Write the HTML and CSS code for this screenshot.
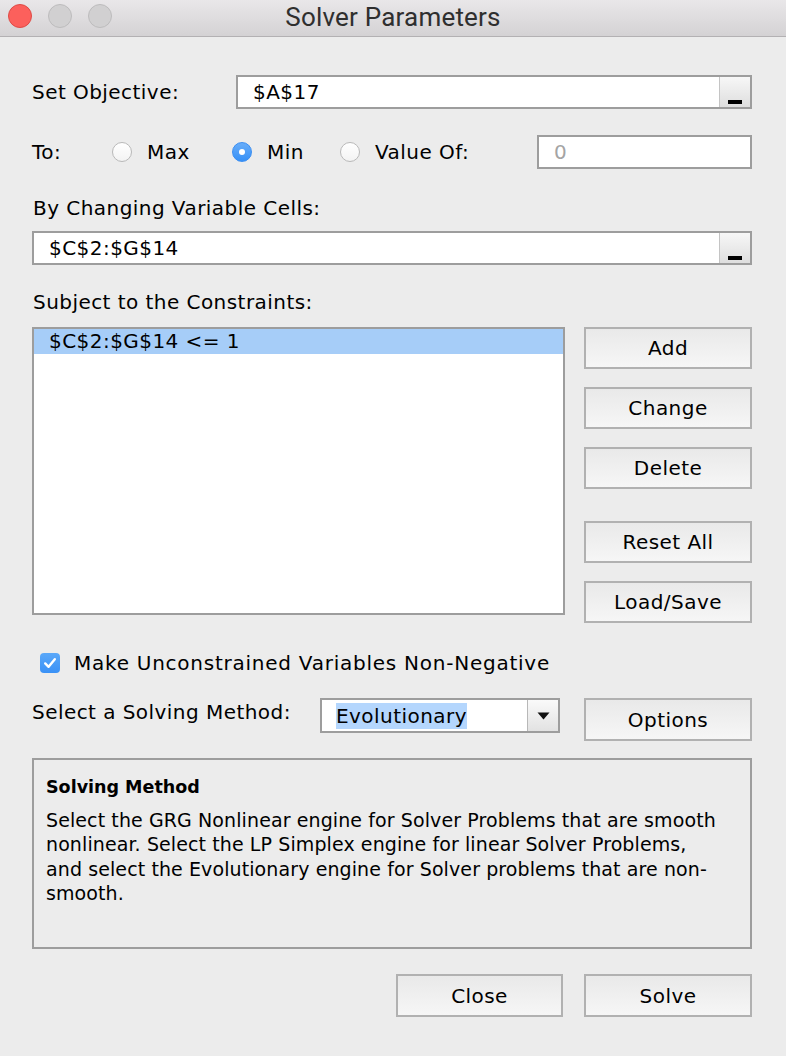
FILE: index.html
```html
<!DOCTYPE html>
<html>
<head>
<meta charset="utf-8">
<link rel="stylesheet" href="styles.css">
</head>
<body>
<div class="window">
  <div class="titlebar">
    <div class="lights">
      <span class="light red"></span>
      <span class="light gray"></span>
      <span class="light gray"></span>
    </div>
    <div class="title">Solver Parameters</div>
  </div>
  <div class="content">
    <div class="row objective">
      <div class="label obj-label">Set Objective:</div>
      <div class="field ref-field">
        <span class="field-text">$A$17</span>
        <span class="collapse-btn"><span class="bar"></span></span>
      </div>
    </div>

    <div class="row to-row">
      <div class="label to-label">To:</div>
      <div class="option opt-max"><span class="radio"></span><span class="opt-text">Max</span></div>
      <div class="option opt-min"><span class="radio checked"></span><span class="opt-text">Min</span></div>
      <div class="option opt-val"><span class="radio"></span><span class="opt-text">Value Of:</span></div>
      <div class="field value-field"><span class="field-text dim">0</span></div>
    </div>

    <div class="label section-label by-label">By Changing Variable Cells:</div>
    <div class="field ref-field wide">
      <span class="field-text">$C$2:$G$14</span>
      <span class="collapse-btn"><span class="bar"></span></span>
    </div>

    <div class="label section-label subj-label">Subject to the Constraints:</div>
    <div class="constraints">
      <div class="listbox">
        <div class="list-item selected">$C$2:$G$14 &lt;= 1</div>
      </div>
      <div class="btn-col">
        <div class="btn">Add</div>
        <div class="btn">Change</div>
        <div class="btn">Delete</div>
        <div class="btn gap-top">Reset All</div>
        <div class="btn">Load/Save</div>
      </div>
    </div>

    <div class="check-row">
      <span class="checkbox">
        <svg width="20" height="20" viewBox="0 0 20 20"><path d="M5.2 10.4 L8.6 13.8 L14.8 6.2" fill="none" stroke="#fff" stroke-width="2.4" stroke-linecap="round" stroke-linejoin="round"/></svg>
      </span>
      <span class="check-text">Make Unconstrained Variables Non-Negative</span>
    </div>

    <div class="method-row">
      <div class="label method-label">Select a Solving Method:</div>
      <div class="select">
        <span class="select-text"><span class="hl">Evolutionary</span></span>
        <span class="select-arrow">
          <svg width="13" height="8" viewBox="0 0 13 8"><path d="M0.5 0.5 H12.5 L6.5 7.5 Z" fill="#111"/></svg>
        </span>
      </div>
      <div class="btn options-btn">Options</div>
    </div>

    <div class="infobox">
      <div class="info-title">Solving Method</div>
      <div class="info-text">Select the GRG Nonlinear engine for Solver Problems that are smooth<br>nonlinear. Select the LP Simplex engine for linear Solver Problems,<br>and select the Evolutionary engine for Solver problems that are non-<br>smooth.</div>
    </div>

    <div class="footer">
      <div class="btn close-btn">Close</div>
      <div class="btn">Solve</div>
    </div>
  </div>
</div>
</body>
</html>
```

FILE: styles.css
```css
html, body {
  margin: 0;
  padding: 0;
}
body {
  background: #ececec;
  font-family: "DejaVu Sans", "Liberation Sans", sans-serif;
  font-size: 20px;
  letter-spacing: 0.45px;
  color: #000;
}
.window {
  width: 786px;
  height: 1056px;
  background: #ececec;
  overflow: hidden;
}
.titlebar {
  height: 36px;
  border-bottom: 1px solid #b3b1b3;
  background: linear-gradient(#e9e7e9, #d4d2d4);
  display: flex;
  align-items: center;
  position: relative;
}
.lights {
  display: flex;
  gap: 16px;
  padding-left: 8px;
  margin-top: -4px;
}
.light {
  width: 22px;
  height: 22px;
  border-radius: 50%;
  display: block;
}
.light.red {
  background: #fc605c;
  border: 1px solid #de4b46;
}
.light.gray {
  background: #d1d0d1;
  border: 1px solid #bdbcbd;
}
.title {
  position: absolute;
  left: 0;
  right: 0;
  top: 2px;
  text-align: center;
  font-family: "Roboto", "Liberation Sans", sans-serif;
  font-size: 26px;
  letter-spacing: 0.2px;
  color: #2f2f2f;
  line-height: 30px;
}
.content {
  padding: 0 34px 0 32px;
}
.label {
  line-height: 24px;
  white-space: nowrap;
}
.row {
  display: flex;
  align-items: center;
}
.objective {
  margin-top: 38px;
}
.obj-label {
  width: 204px;
}
.field {
  box-sizing: border-box;
  height: 34px;
  border: 2px solid #9d9d9d;
  background: #fff;
  display: flex;
  align-items: center;
  position: relative;
}
.ref-field {
  flex: 1;
}
.field-text {
  padding-left: 15px;
  flex: 1;
  line-height: 24px;
}
.dim {
  color: #a4a4a4;
}
.collapse-btn {
  width: 31px;
  height: 30px;
  box-sizing: border-box;
  background: linear-gradient(#f7f7f7, #dedede);
  border-left: 1px solid #c4c4c4;
  display: flex;
  align-items: flex-end;
  justify-content: center;
  padding-bottom: 3px;
}
.bar {
  display: block;
  width: 14px;
  height: 4px;
  background: #000;
}
.to-row {
  margin-top: 26px;
}
.to-label {
  width: 80px;
}
.option {
  display: flex;
  align-items: center;
}
.opt-max { width: 120px; }
.opt-min { width: 108px; }
.opt-val { width: 197px; }
.radio {
  box-sizing: border-box;
  width: 20px;
  height: 20px;
  border-radius: 50%;
  border: 1px solid #b9b9b9;
  background: linear-gradient(#ffffff, #f3f3f3);
  margin-right: 15px;
  position: relative;
  flex: none;
}
.radio.checked {
  border-color: #3a8ef2;
  background: linear-gradient(#68adf9, #3690f7);
}
.radio.checked::after {
  content: "";
  position: absolute;
  left: 6px;
  top: 6px;
  width: 6px;
  height: 6px;
  border-radius: 50%;
  background: #fff;
}
.opt-text {
  line-height: 24px;
  white-space: nowrap;
}
.value-field {
  flex: 1;
}
.section-label {
  margin-left: 1px;
}
.by-label {
  margin-top: 27px;
  margin-bottom: 11px;
}
.wide {
  display: flex;
}
.subj-label {
  margin-top: 25px;
  margin-bottom: 13px;
}
.constraints {
  display: flex;
  align-items: flex-start;
  gap: 19px;
}
.listbox {
  box-sizing: border-box;
  width: 533px;
  height: 288px;
  border: 2px solid #9d9d9d;
  background: #fff;
}
.list-item {
  height: 25px;
  line-height: 25px;
  padding-left: 15px;
}
.list-item.selected {
  background: #a6cdf8;
}
.btn-col {
  display: flex;
  flex-direction: column;
  gap: 18px;
  flex: 1;
}
.btn {
  box-sizing: border-box;
  height: 42px;
  border: 2px solid #b1b1b1;
  background: linear-gradient(#e9e9e9, #f6f6f6);
  display: flex;
  align-items: center;
  justify-content: center;
  line-height: 24px;
  width: 168px;
}
.gap-top {
  margin-top: 14px;
}
.check-row {
  margin-top: 30px;
  padding-left: 8px;
  display: flex;
  align-items: center;
  height: 20px;
}
.checkbox {
  width: 20px;
  height: 20px;
  border-radius: 4px;
  background: linear-gradient(#5aa8f9, #3a91f6);
  display: block;
  margin-right: 14px;
}
.checkbox svg {
  display: block;
}
.check-text {
  line-height: 24px;
  white-space: nowrap;
  letter-spacing: 0.75px;
}
.method-row {
  margin-top: 25px;
  display: flex;
  align-items: flex-start;
}
.method-label {
  width: 288px;
  margin-top: 2px;
}
.select {
  box-sizing: border-box;
  width: 240px;
  height: 35px;
  border: 2px solid #9d9d9d;
  background: #fff;
  display: flex;
  align-items: center;
}
.select-text {
  flex: 1;
  padding-left: 14px;
  line-height: 26px;
}
.hl {
  background: #b4d6fd;
  display: inline-block;
  line-height: 26px;
}
.select-arrow {
  width: 31px;
  height: 31px;
  box-sizing: border-box;
  border-left: 1px solid #b8b8b8;
  background: linear-gradient(#fafafa, #e2e2e2);
  display: flex;
  align-items: center;
  justify-content: center;
}
.options-btn {
  margin-left: 24px;
  height: 43px;
}
.infobox {
  box-sizing: border-box;
  margin-top: 17px;
  height: 191px;
  border: 2px solid #9d9d9d;
  padding: 15px 8px 0 12px;
}
.info-title {
  font-weight: bold;
  font-size: 17.5px;
  letter-spacing: 0;
  line-height: 24px;
  margin-bottom: 9px;
}
.info-text {
  font-size: 19px;
  letter-spacing: 0.1px;
  line-height: 24.3px;
  white-space: nowrap;
}
.footer {
  margin-top: 25px;
  display: flex;
  justify-content: flex-end;
  gap: 21px;
}
.footer .btn {
  height: 43px;
}
.close-btn {
  width: 167px;
}
```
